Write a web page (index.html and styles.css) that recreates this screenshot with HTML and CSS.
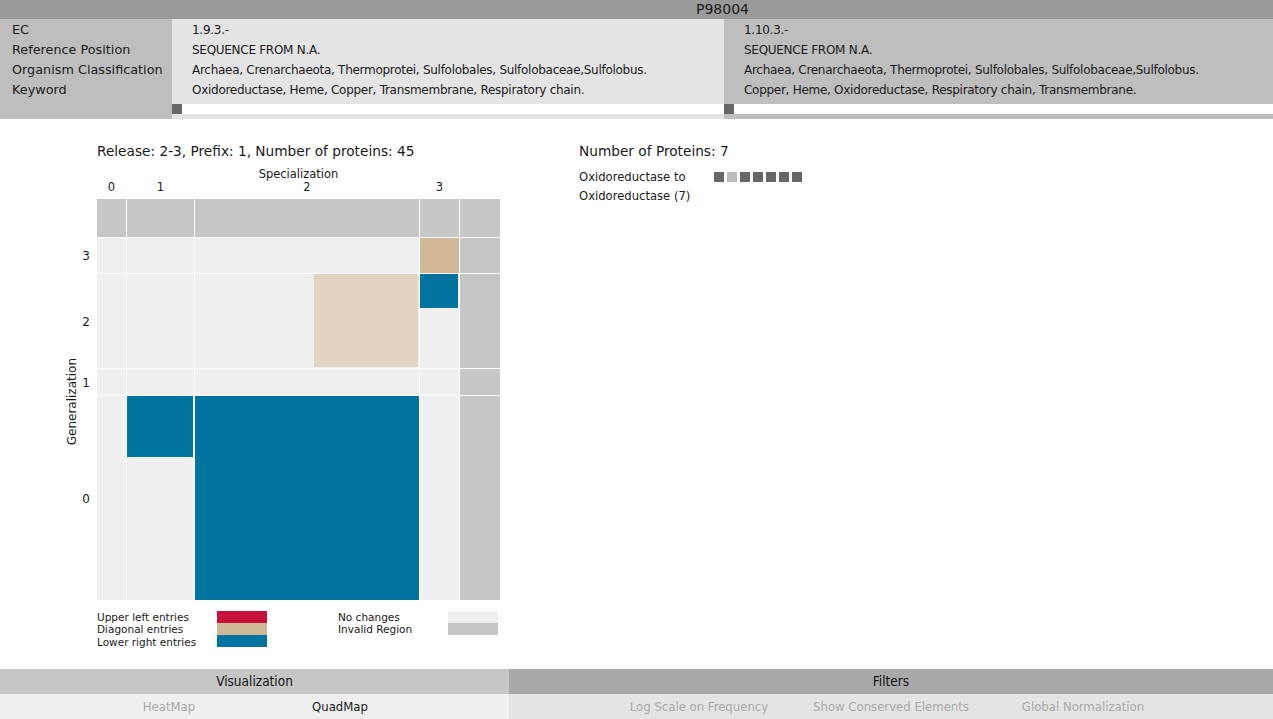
FILE: index.html
```html
<!DOCTYPE html>
<html>
<head>
<meta charset="utf-8">
<link rel="stylesheet" href="styles.css">
</head>
<body>
<div class="app">
  <header class="top">
    <div class="top-spacer"></div>
    <div class="top-title">P98004</div>
  </header>
  <section class="info">
    <div class="info-col labels">
      <div class="rows">
        <div>EC</div>
        <div>Reference Position</div>
        <div>Organism Classification</div>
        <div>Keyword</div>
      </div>
    </div>
    <div class="info-col data light">
      <div class="rows">
        <div>1.9.3.-</div>
        <div>SEQUENCE FROM N.A.</div>
        <div>Archaea, Crenarchaeota, Thermoprotei, Sulfolobales, Sulfolobaceae,Sulfolobus.</div>
        <div>Oxidoreductase, Heme, Copper, Transmembrane, Respiratory chain.</div>
      </div>
      <div class="scroll"><div class="thumb"></div></div>
    </div>
    <div class="info-col data dark">
      <div class="rows">
        <div>1.10.3.-</div>
        <div>SEQUENCE FROM N.A.</div>
        <div>Archaea, Crenarchaeota, Thermoprotei, Sulfolobales, Sulfolobaceae,Sulfolobus.</div>
        <div>Copper, Heme, Oxidoreductase, Respiratory chain, Transmembrane.</div>
      </div>
      <div class="scroll"><div class="thumb"></div></div>
    </div>
  </section>

  <main class="main">
    <div class="quad-panel">
      <div class="panel-title">Release: 2-3, Prefix: 1, Number of proteins: 45</div>
      <div class="x-axis">
        <div class="x-title">Specialization</div>
        <div class="x-nums">
          <span class="w0">0</span><span class="w1">1</span><span class="w2">2</span><span class="w3">3</span><span class="w4"></span>
        </div>
      </div>
      <div class="qm">
        <div class="y-title"><span>Generalization</span></div>
        <div class="ynum r-h"></div>
        <div class="ynum r3">3</div>
        <div class="ynum r2">2</div>
        <div class="ynum r1">1</div>
        <div class="ynum r0">0</div>

        <!-- header row -->
        <div class="cell inv"></div><div class="cell inv"></div><div class="cell inv"></div><div class="cell inv"></div><div class="cell inv"></div>
        <!-- row 3 -->
        <div class="cell nc"></div><div class="cell nc"></div><div class="cell nc"></div><div class="cell diag"></div><div class="cell inv"></div>
        <!-- row 2 -->
        <div class="cell nc"></div><div class="cell nc"></div>
        <div class="cell nc end"><div class="blk diag-light" style="width:104px;height:93px"></div></div>
        <div class="cell nc"><div class="blk lr" style="width:38px;height:34px"></div></div>
        <div class="cell inv"></div>
        <!-- row 1 -->
        <div class="cell nc"></div><div class="cell nc"></div><div class="cell nc"></div><div class="cell nc"></div><div class="cell inv"></div>
        <!-- row 0 -->
        <div class="cell nc"></div>
        <div class="cell nc"><div class="blk lr" style="width:66px;height:61px"></div></div>
        <div class="cell lr"></div>
        <div class="cell nc"></div>
        <div class="cell inv"></div>
      </div>
      <div class="legend">
        <div class="leg-group">
          <div class="leg-text">
            <div>Upper left entries</div>
            <div>Diagonal entries</div>
            <div>Lower right entries</div>
          </div>
          <div class="leg-sw">
            <div class="sw ul"></div>
            <div class="sw diag"></div>
            <div class="sw lr"></div>
          </div>
        </div>
        <div class="leg-group second">
          <div class="leg-text">
            <div>No changes</div>
            <div>Invalid Region</div>
          </div>
          <div class="leg-sw">
            <div class="sw nc"></div>
            <div class="sw inv"></div>
          </div>
        </div>
      </div>
    </div>

    <div class="prot-panel">
      <div class="panel-title">Number of Proteins: 7</div>
      <div class="prot-row">
        <div class="prot-name">Oxidoreductase to<br>Oxidoreductase (7)</div>
        <div class="squares">
          <span class="sq"></span><span class="sq lite"></span><span class="sq"></span><span class="sq"></span><span class="sq"></span><span class="sq"></span><span class="sq"></span>
        </div>
      </div>
    </div>
  </main>

  <footer class="bottom">
    <div class="sec vis">
      <div class="sec-head">Visualization</div>
      <div class="sec-tabs">
        <span class="tab off">HeatMap</span>
        <span class="tab on">QuadMap</span>
      </div>
    </div>
    <div class="sec filt">
      <div class="sec-head">Filters</div>
      <div class="sec-tabs">
        <span class="tab off">Log Scale on Frequency</span>
        <span class="tab off">Show Conserved Elements</span>
        <span class="tab off">Global Normalization</span>
      </div>
    </div>
  </footer>
</div>
</body>
</html>
```

FILE: styles.css
```css
* { box-sizing: border-box; }
html, body { margin: 0; padding: 0; }
body {
  font-family: "DejaVu Sans", "Liberation Sans", sans-serif;
  color: #1a1a1a;
  background: #fff;
}
.app {
  display: flex;
  flex-direction: column;
  height: 719px;
  width: 1273px;
  overflow: hidden;
}

/* top bar */
.top {
  display: flex;
  height: 19px;
  background: #999999;
  font-size: 14px;
  line-height: 19px;
}
.top-spacer { width: 172px; }
.top-title { flex: 1; text-align: center; color: #1a1a1a; }

/* info */
.info {
  display: grid;
  grid-template-columns: 172px 552px 549px;
  height: 100px;
}
.info-col { display: flex; flex-direction: column; }
.labels { background: #bebebe; padding-left: 12px; font-size: 12.8px; }
.data { font-size: 12px; letter-spacing: -0.28px; }
.light { background: #e4e4e4; }
.dark { background: #bebebe; }
.rows { height: 85px; padding-top: 1px; }
.rows div { height: 20px; line-height: 20px; white-space: nowrap; }
.data .rows { padding-left: 20px; }
.scroll { height: 10px; background: #fff; }
.thumb { width: 10px; height: 10px; background: #666; }

/* main */
.main {
  flex: 1;
  display: flex;
  padding-top: 22px;
  padding-left: 63px;
}
.panel-title {
  font-size: 13.7px;
  line-height: 20px;
  height: 20px;
}
.quad-panel { width: 437px; }
.quad-panel .panel-title { padding-left: 34px; }

.x-axis {
  margin-left: 34px;
  width: 403px;
  font-size: 11.5px;
  padding-top: 7px;
}
.x-title { text-align: center; line-height: 13px; height: 13px; }
.x-nums { display: flex; gap: 1px; line-height: 13px; height: 13px; }
.x-nums span { text-align: center; }
.w0 { width: 29px; } .w1 { width: 67px; } .w2 { width: 224px; } .w3 { width: 39px; } .w4 { width: 40px; }

.qm {
  margin-top: 5px;
  display: grid;
  grid-template-columns: 18px 14px 29px 67px 224px 39px 40px;
  grid-template-rows: 38px 35px 94px 26px 204px;
  gap: 1px;
}
.y-title {
  grid-column: 1;
  grid-row: 1 / 6;
  display: flex;
  align-items: center;
  justify-content: center;
  padding-top: 5px;
  font-size: 12px;
}
.y-title span {
  writing-mode: vertical-rl;
  transform: rotate(180deg);
  white-space: nowrap;
}
.ynum {
  grid-column: 2;
  font-size: 12px;
  display: flex;
  align-items: center;
  justify-content: flex-end;
  padding-right: 6px;
  padding-top: 1px;
}
.r-h { grid-row: 1; } .r3 { grid-row: 2; } .r2 { grid-row: 3; } .r1 { grid-row: 4; } .r0 { grid-row: 5; }
.cell { display: flex; align-items: flex-start; }
.cell.end { justify-content: flex-end; padding-right: 1px; }
.inv { background: #c6c6c6; }
.nc { background: #efefef; }
.diag { background: #cfb797; }
.diag-light { background: #e2d4c1; }
.lr { background: #00739f; }
.ul { background: #c8113a; }
.blk { flex: none; }

.legend {
  display: flex;
  margin-left: 34px;
  margin-top: 11px;
  font-size: 10.5px;
}
.leg-group { display: flex; }
.leg-text { width: 120px; }
.leg-text div { height: 12.3px; line-height: 12.3px; white-space: nowrap; }
.leg-sw .sw { width: 50px; height: 12px; }
.leg-group.second { margin-left: 71px; }
.leg-group.second .leg-text { width: 110px; }

/* proteins panel */
.prot-panel { margin-left: 79px; }
.prot-row { display: flex; margin-top: 7px; }
.prot-name { font-size: 11.6px; line-height: 19px; width: 135px; }
.squares { display: flex; gap: 3px; padding-top: 4px; }
.sq { width: 10px; height: 10px; background: #666; }
.sq.lite { background: #bbb; }

/* bottom */
.bottom {
  display: flex;
  height: 50px;
  font-family: "Liberation Sans Narrow", "DejaVu Sans Condensed", "Liberation Sans", sans-serif;
}
.sec { display: flex; flex-direction: column; }
.vis { width: 509px; }
.filt { flex: 1; }
.sec-head {
  height: 25px;
  line-height: 25px;
  text-align: center;
  font-size: 13.5px;
  color: #111;
}
.vis .sec-head { background: #c6c6c6; }
.filt .sec-head { background: #a9a9a9; }
.sec-tabs {
  height: 25px;
  display: flex;
  justify-content: center;
  align-items: center;
  font-size: 13px;
  padding-bottom: 1px;
}
.vis .sec-tabs { background: #efefef; }
.filt .sec-tabs { background: #e4e4e4; }
.vis .tab { width: 171px; text-align: center; }
.filt .tab { width: 192px; text-align: center; }
.tab.off { color: #a8a8a8; }
.tab.on { color: #1a1a1a; }
```
